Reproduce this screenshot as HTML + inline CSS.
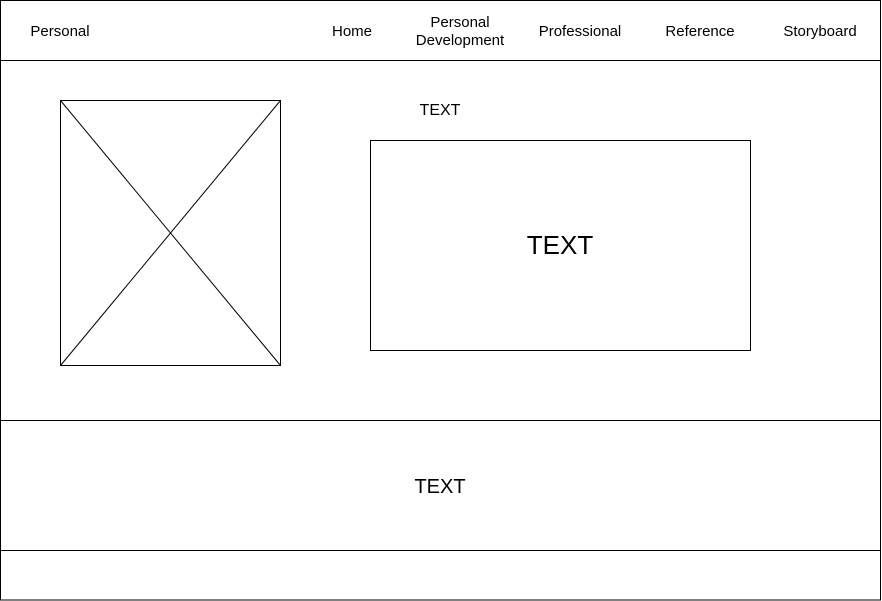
<!DOCTYPE html>
<html><head><style>
html,body{margin:0;padding:0;background:#fff;}
svg{display:block;}
text{font-family:"Liberation Sans",Helvetica,Arial,sans-serif;fill:#000;}
</style></head><body>
<svg width="882" height="601" viewBox="0 0 882 601">
<g fill="none" stroke="#000" stroke-width="1">
<rect x="0.5" y="0.5" width="880" height="599.5"/>
<line x1="0" y1="60.5" x2="881" y2="60.5"/>
<line x1="0" y1="420.5" x2="881" y2="420.5"/>
<line x1="0" y1="550.5" x2="881" y2="550.5"/>
<rect x="60.5" y="100.5" width="220" height="265"/>
<line x1="60.5" y1="100.5" x2="280.5" y2="365.5"/>
<line x1="280.5" y1="100.5" x2="60.5" y2="365.5"/>
<rect x="370.5" y="140.5" width="380" height="210"/>
</g>
<g font-size="15" text-anchor="middle">
<text x="60" y="36">Personal</text>
<text x="352" y="36">Home</text>
<text x="460" y="27">Personal</text>
<text x="460" y="45">Development</text>
<text x="580" y="36">Professional</text>
<text x="700" y="36">Reference</text>
<text x="820" y="36">Storyboard</text>
</g>
<text x="440" y="115" font-size="16" text-anchor="middle">TEXT</text>
<text x="560" y="254" font-size="26" text-anchor="middle">TEXT</text>
<text x="440" y="493" font-size="20" text-anchor="middle">TEXT</text>
</svg>
</body></html>
